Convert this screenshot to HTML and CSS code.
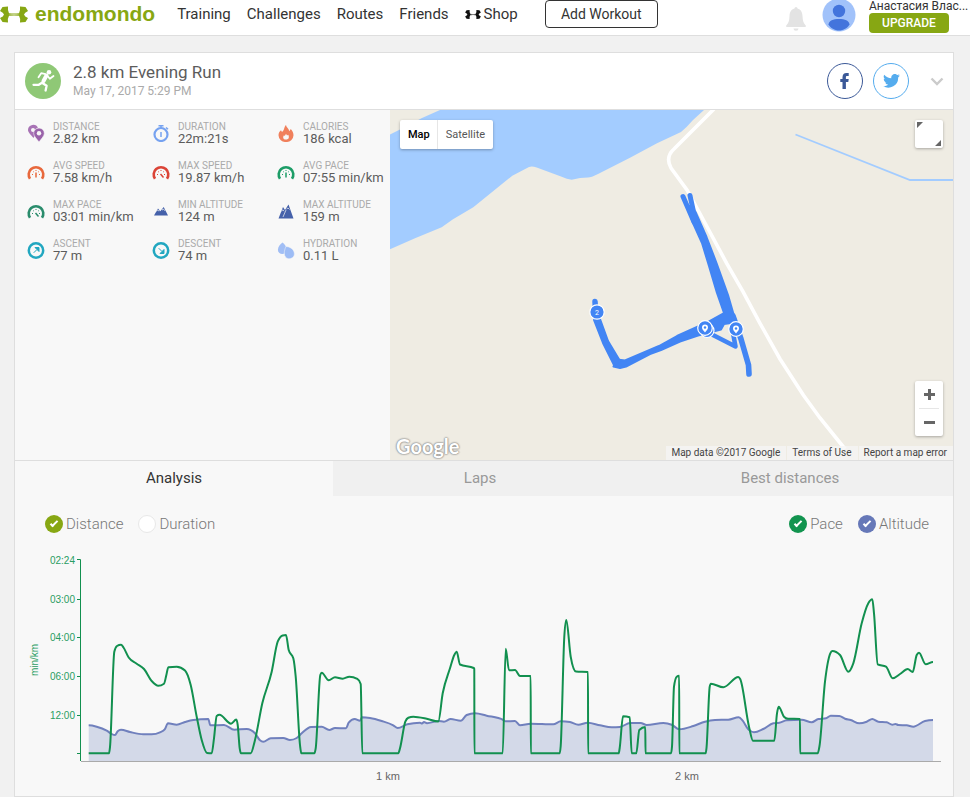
FILE: index.html
```html
<!DOCTYPE html>
<html lang="en">
<head>
<meta charset="utf-8">
<title>2.8 km Evening Run</title>
<link rel="stylesheet" href="styles.css">
</head>
<body>
<svg class="defs" aria-hidden="true">
  <symbol id="ua" viewBox="0 0 28 16">
    <path d="M2.500 .5L8 0Q7.500 4.500 9 6.700Q14 7.300 19 6.700Q20.500 4.500 20 0L25.500 .5L28 4.500Q24.500 6 24 8Q24.500 10 28 11.500L25.500 15.500L20 16Q20.500 11.500 19 9.300Q14 8.700 9 9.300Q7.500 11.500 8 16L2.500 15.500L0 11.500Q3.500 10 4 8Q3.500 6 0 4.500ZM8 8Q14 8.600 20 8Q14 7.400 8 8Z" fill="currentColor" fill-rule="evenodd"/>
  </symbol>
  <symbol id="gauge" viewBox="0 0 18 18">
    <path d="M3 15.700A7.300 7.300 0 1 1 15 15.700" fill="none" stroke="currentColor" stroke-width="2.600"/>
    <path d="M5 11.500h1M6.200 8.500l.7.7M9 7v1M11.800 8.500l-.7.7M12 11.500h1" stroke="currentColor" stroke-width="1"/>
  </symbol>
  <symbol id="dial" viewBox="0 0 18 18">
    <circle cx="9" cy="9.500" r="7.200" fill="none" stroke="currentColor" stroke-width="2.500"/>
  </symbol>
</svg>

<header class="topbar">
  <a class="logo" href="#"><svg class="logo-mark" aria-hidden="true"><use href="#ua"/></svg>endomondo</a>
  <nav class="nav">
    <a href="#">Training</a>
    <a href="#">Challenges</a>
    <a href="#">Routes</a>
    <a href="#">Friends</a>
    <a class="shop" href="#"><svg class="shop-mark" aria-hidden="true"><use href="#ua"/></svg>Shop</a>
  </nav>
  <button class="add" type="button">Add Workout</button>
  <div class="account">
    <button class="bell" type="button" aria-label="Notifications">
      <svg width="20" height="24" viewBox="0 0 20 24"><path d="M8.500 1.500a1.500 1.500 0 0 1 3 0C15 2.500 16.300 5 16.500 9c.2 4.500.8 7 3.200 9.500.5.600.2 1.500-.7 1.500H1c-.9 0-1.200-.9-.7-1.500C2.700 16 3.300 13.500 3.500 9 3.700 5 5 2.500 8.500 1.500ZM7.500 21.500h5a2.500 2.200 0 0 1-5 0Z" fill="#e3e3e3"/></svg>
    </button>
    <svg class="avatar" viewBox="0 0 34 34" role="img" aria-label="Profile"><circle cx="17" cy="17" r="16.500" fill="#a1c2fa"/><circle cx="17" cy="13" r="6.200" fill="#4374dc"/><path d="M6.500 26.500C7 22.500 11 21 17 21s10 1.500 10.500 5.500C25.500 30 21.500 32.500 17 32.500S8.500 30 6.500 26.500Z" fill="#4374dc"/></svg>
    <div class="who">
      <a class="name" href="#">Анастасия Влас...</a>
      <a class="upgrade" href="#">UPGRADE</a>
    </div>
  </div>
</header>

<main class="page">
  <article class="card">
    <header class="card-head">
      <svg class="sport" viewBox="0 0 36 36" aria-hidden="true"><circle cx="18" cy="18" r="18" fill="#8fc876"/><circle cx="24" cy="9.300" r="2.300" fill="#fff"/><path d="M19 18l-1.600 2 4.200 2.800-1 4.700M17.400 19.500l-3.600 2.300H8.500" fill="none" stroke="#fff" stroke-width="2.300" stroke-linejoin="round" stroke-linecap="round"/><path d="M21.500 12.500L18.500 18" stroke="#fff" stroke-width="4" stroke-linecap="round"/><path d="M20.500 11.200l-4.300-1-2.700 4M23 13.500l1.800 2.300 3.700-2.800" fill="none" stroke="#fff" stroke-width="1.800" stroke-linecap="round" stroke-linejoin="round"/></svg>
      <div class="heading">
        <h1>2.8 km Evening Run</h1>
        <time datetime="2017-05-17T17:29">May 17, 2017 5:29 PM</time>
      </div>
      <div class="share">
        <button class="round fb" type="button" aria-label="Share on Facebook"><svg width="10" height="16" viewBox="0 0 10 16"><path d="M2.500 16V9H.3V6h2.200V4.200C2.500 1.500 4 0 6.400 0H8.700v3H7.200C6.200 3 5.900 3.400 5.900 4.200V6h2.800L8.300 9H5.900v7Z" fill="currentColor"/></svg></button>
        <button class="round tw" type="button" aria-label="Share on Twitter"><svg width="17" height="14" viewBox="0 0 24 20"><path d="M24 2.300a10 10 0 0 1-2.800.8A5 5 0 0 0 23.300.4a10 10 0 0 1-3.100 1.200 4.900 4.900 0 0 0-8.400 4.500A14 14 0 0 1 1.700.9a4.900 4.900 0 0 0 1.500 6.600A5 5 0 0 1 1 6.900a4.900 4.900 0 0 0 3.900 4.900 5 5 0 0 1-2.200.1 4.900 4.900 0 0 0 4.600 3.400A10 10 0 0 1 0 17.300a14 14 0 0 0 21.500-12.400A10 10 0 0 0 24 2.300Z" fill="currentColor"/></svg></button>
        <button class="more" type="button" aria-label="More"><svg width="14" height="9" viewBox="0 0 14 9"><path d="M1.500 1.500L7 7l5.500-5.500" fill="none" stroke="#cbcbcb" stroke-width="2.400"/></svg></button>
      </div>
    </header>

    <section class="overview">
      <ul class="stats">
        <li><svg viewBox="0 0 18 18" aria-hidden="true"><path d="M6.500 14C3 10 1 8 1 6a5.200 5.200 0 0 1 10-2C8 5 7 8 8 11Z" fill="#a873b5"/><circle cx="6" cy="6" r="2" fill="#f7f7f7"/><path d="M12 18C9 14 6.700 12 6.700 9.300a5.300 5.300 0 0 1 10.600 0C17.300 12 15 14 12 18Z" fill="#9a63aa" stroke="#f7f7f7" stroke-width=".6"/><circle cx="12" cy="9.300" r="2.200" fill="#f7f7f7"/></svg><div><span>DISTANCE</span><b>2.82 km</b></div></li>
        <li><svg viewBox="0 0 18 18" aria-hidden="true"><circle cx="9" cy="10.500" r="6.500" fill="none" stroke="#76a2f0" stroke-width="2.200"/><path d="M6.500 1.700h5M9 1.700v2M9 8v5M14 3.500l2 1.800" stroke="#76a2f0" stroke-width="1.500"/></svg><div><span>DURATION</span><b>22m:21s</b></div></li>
        <li><svg viewBox="0 0 18 18" aria-hidden="true"><path d="M9 1c.3 2.500 3 3.500 3.300 6.300L13.800 5C15.500 7 16.500 9 16.500 11.200A7 7 0 0 1 9 18a7 7 0 0 1-7.500-6.800C1.500 9 2.500 7.500 4 6.300L5 8C7.500 6.500 6.800 3 9 1Z" fill="#f0805c"/><path d="M9 9.700l1 1.800 1.200-.8C12.500 13 12 15.500 9 15.500S5.500 13 7 11.200l.8.800Z" fill="#f7f7f7"/></svg><div><span>CALORIES</span><b>186 kcal</b></div></li>
        <li class="orange"><svg viewBox="0 0 18 18" aria-hidden="true"><use href="#gauge"/><path d="M9 9.500v5" stroke="currentColor" stroke-width="1.500"/></svg><div><span>AVG SPEED</span><b>7.58 km/h</b></div></li>
        <li class="red"><svg viewBox="0 0 18 18" aria-hidden="true"><use href="#gauge"/><path d="M8.500 11l3 3.500" stroke="currentColor" stroke-width="1.500"/></svg><div><span>MAX SPEED</span><b>19.87 km/h</b></div></li>
        <li class="green"><svg viewBox="0 0 18 18" aria-hidden="true"><use href="#gauge"/><path d="M9 9.500v5" stroke="currentColor" stroke-width="1.500"/></svg><div><span>AVG PACE</span><b>07:55 min/km</b></div></li>
        <li class="pine"><svg viewBox="0 0 18 18" aria-hidden="true"><use href="#gauge"/><path d="M8.500 11l3 3.500" stroke="currentColor" stroke-width="1.500"/></svg><div><span>MAX PACE</span><b>03:01 min/km</b></div></li>
        <li><svg viewBox="0 0 18 18" aria-hidden="true"><path d="M2 13.500L6 6.500l2.300 2.700L11.700 5l4.300 8.500Z" fill="#4561aa"/><path d="M4.500 9l1.200-1 1 1 .8-.3M10 8l1.300-.7 1 .9 1-.2" stroke="#f7f7f7" stroke-width=".8" fill="none"/></svg><div><span>MIN ALTITUDE</span><b>124 m</b></div></li>
        <li><svg viewBox="0 0 18 18" aria-hidden="true"><path d="M1.500 16.500L6 5l2 3 3.500-5.500L16.500 16.500Z" fill="#4561aa"/><path d="M4.500 9l1.500-1.200L7 9.200M9.500 7l1.500-1 1.500 1.500M6 15L9 8" stroke="#f7f7f7" stroke-width=".7" fill="none"/></svg><div><span>MAX ALTITUDE</span><b>159 m</b></div></li>
        <li class="cyan"><svg viewBox="0 0 18 18" aria-hidden="true"><use href="#dial"/><path d="M12 6.500v4L8 6.500ZM6.700 11.800l3-3" fill="currentColor" stroke="currentColor" stroke-width="1"/></svg><div><span>ASCENT</span><b>77 m</b></div></li>
        <li class="cyan"><svg viewBox="0 0 18 18" aria-hidden="true"><use href="#dial"/><path d="M12 12.500v-4L8 12.500ZM6.700 7.200l3 3" fill="currentColor" stroke="currentColor" stroke-width="1"/></svg><div><span>DESCENT</span><b>74 m</b></div></li>
        <li><svg viewBox="0 0 18 18" aria-hidden="true"><path d="M5.500 1.500C8 3.500 9.500 6 9.500 8.700a4.300 4.300 0 0 1-8.600 0C.9 6 3 3.500 5.500 1.500Z" fill="#a1bef5"/><path d="M9 5.500c4 .2 7.800 2.800 8.300 6.500a5 5 0 0 1-9.600 2.500C6.800 12 7.500 8.500 9 5.500Z" fill="#9dbcf5" stroke="#f7f7f7" stroke-width=".5"/></svg><div><span>HYDRATION</span><b>0.11 L</b></div></li>
      </ul>

      <div class="map">
        <svg class="tiles" viewBox="390 110 563 350" preserveAspectRatio="xMidYMid slice" aria-hidden="true">
          <path d="M390 110H953V460H390Z" fill="#efece3"/>
          <path d="M390 134.500L405 127 422 118 440 110H704L693 120Q687 127 681 132L657 143.300 630 157.700 598 174Q591 177.500 588 177.500L580 178 571.700 179.700Q567 179 561.700 176.700L536.700 167.500Q532 166 529 167L512.300 175.700 473.300 207.300 453 219.300 441.700 227.300 415 238.300 390 249.300Z" fill="#a3ccff"/>
          <path d="M714 109L674 149Q665 157 671 168L687 190 698 210 726.700 263.300 743 291.700 760 323.300 780 359 803.300 395 820 418 845 449" fill="none" stroke="#fff" stroke-width="3.600"/>
          <path d="M795.500 134.500L910 180H953" fill="none" stroke="#a3ccff" stroke-width="1.800"/>
          <g fill="#4285f4" stroke="#4285f4" stroke-linecap="round" stroke-linejoin="round">
            <path d="M683 196.500L694 222" stroke-width="5" fill="none"/>
            <path d="M690 195.500L694 214" stroke-width="5" fill="none"/>
            <path d="M686 203L693 223 702 243 709 266 717 293 724 313 706 323 697 327 677 336 659 346 625 360.500 617 359.500 613.500 366.500 620 368 626 366.500 650 354 661 350 680 341.500 698 335.500 721 329.500 724 324 731 323 735.500 321 728 295 716.500 263 706.500 237 695.500 212Z" stroke-width="2"/>
            <path d="M733 316L741 339 748.500 365 749 374" stroke-width="5.600" fill="none"/>
            <path d="M711 334L735.500 346.500 733 333" stroke-width="4.500" fill="none"/>
            <path d="M595 301.500L596 318" stroke-width="5.500" fill="none"/>
            <path d="M594 320L603 343 614 365 620 361 608 341 600 319Z" stroke-width="2"/>
          </g>
          <g fill="#4285f4" stroke="#fff" stroke-width="1.200">
            <circle cx="707" cy="330.500" r="7"/><circle cx="705" cy="328" r="7.300"/><circle cx="736" cy="329" r="7.300"/><circle cx="597" cy="312" r="7.200"/>
          </g>
          <path d="M705 332.500c-1.500-2-3-3.300-3-5a3 3 0 0 1 6 0c0 1.700-1.500 3-3 5ZM736 333.500c-1.500-2-3-3.300-3-5a3 3 0 0 1 6 0c0 1.700-1.500 3-3 5Z" fill="#fff"/>
          <circle cx="705" cy="327.500" r="1.200" fill="#4285f4"/><circle cx="736" cy="328.500" r="1.200" fill="#4285f4"/>
          <text class="pin" x="597" y="315">2</text>
        </svg>
        <div class="map-types"><button class="on" type="button">Map</button><button type="button">Satellite</button></div>
        <button class="fullscreen" type="button" aria-label="Fullscreen"><svg width="28" height="28" viewBox="0 0 28 28"><path d="M2 2h6L2 8ZM26 20v6h-6Z" fill="#666"/></svg></button>
        <div class="zoom">
          <button type="button" aria-label="Zoom in"><svg width="11" height="11" viewBox="0 0 11 11"><path d="M0 5.500h11M5.500 0v11" stroke="#666" stroke-width="3"/></svg></button>
          <button type="button" aria-label="Zoom out"><svg width="11" height="11" viewBox="0 0 11 11"><path d="M0 5.500h11" stroke="#666" stroke-width="3"/></svg></button>
        </div>
        <span class="watermark">Google</span>
        <div class="credits"><span>Map data ©2017 Google</span><a href="#">Terms of Use</a><a href="#">Report a map error</a></div>
      </div>
    </section>

    <nav class="tabs">
      <button class="tab analysis" type="button">Analysis</button>
      <button class="tab laps" type="button">Laps</button>
      <button class="tab best" type="button">Best distances</button>
    </nav>

    <section class="analysis-panel">
      <form class="options">
        <label><input class="lime" type="radio" name="axis" checked>Distance</label>
        <label><input class="lime" type="radio" name="axis">Duration</label>
        <label class="push"><input class="pace" type="checkbox" checked>Pace</label>
        <label><input class="alt" type="checkbox" checked>Altitude</label>
      </form>
      <svg class="chart" viewBox="15 540 938 256" role="img" aria-label="Pace and altitude by distance">
        <path id="altitude-area" class="altitude-area"/>
        <path id="altitude-line" class="altitude-line"/>
        <path id="pace-line" class="pace-line"/>
        <path d="M77 559.500H80.500V761M77 599.500h3M77 637.500h3M77 676.500h3M77 715.500h3M77 753.500h3" class="axis-y"/>
        <path d="M81 761.500H941" class="axis-x"/>
        <g class="y-labels">
          <text x="75" y="564">02:24</text><text x="75" y="603">03:00</text><text x="75" y="641">04:00</text><text x="75" y="680">06:00</text><text x="75" y="719">12:00</text>
        </g>
        <text class="unit" transform="translate(38 660) rotate(-90)">min/km</text>
        <g class="x-labels"><text x="388" y="780">1 km</text><text x="687" y="780">2 km</text></g>
      </svg>
    </section>
  </article>
</main>
<script src="chart.js"></script>
</body>
</html>
```
FILE: styles.css
```css
* { box-sizing: border-box; }

body {
  margin: 0;
  background: #f1f1f1;
  color: #333;
  font-family: Roboto, "Liberation Sans", sans-serif;
  font-size: 15px;
}

a { color: inherit; text-decoration: none; }

button {
  padding: 0;
  border: 0;
  background: none;
  color: inherit;
  font: inherit;
}

svg { display: block; }
.defs { display: none; }

/* Top bar */
.topbar {
  display: flex;
  align-items: flex-start;
  height: 36px;
  background: #fff;
  border-bottom: 1px solid #dedede;
}

.logo {
  display: flex;
  align-items: center;
  gap: 7px;
  height: 28px;
  margin-right: 22px;
  color: #87a713;
  font: bold 21px/28px "Liberation Sans", sans-serif;
}

.logo-mark { width: 28px; height: 17px; }

.nav { display: flex; gap: 16px; line-height: 28px; }
.shop { display: flex; align-items: center; gap: 3px; }
.shop-mark { width: 16px; height: 9px; color: #111; }

.add {
  width: 113px;
  height: 28px;
  margin-left: 27px;
  border: 1px solid #333;
  border-radius: 4px;
  font-size: 14px;
}

.account { display: flex; margin-left: auto; }
.bell { margin: 4px 16px 0 0; }
.avatar { width: 34px; height: 34px; margin: -2px 13px 0 0; }
.who { width: 101px; }
.name { display: block; font-size: 12px; line-height: 12px; white-space: nowrap; }

.upgrade {
  display: block;
  width: 80px;
  margin-top: 1px;
  border-radius: 4px;
  background: #87a713;
  color: #fff;
  font-size: 12px;
  font-weight: 500;
  line-height: 20px;
  text-align: center;
}

/* Workout card */
.page { padding: 16px 16px 0 14px; }

.card { border: 1px solid #dedede; background: #f8f8f8; }

.card-head {
  display: flex;
  align-items: center;
  height: 57px;
  padding: 0 9px 0 10px;
  border-bottom: 1px solid #dedede;
  background: #fff;
}

.sport { width: 36px; height: 36px; }
.heading { margin-left: 12px; }
h1 { margin: 0; color: #5c5c5c; font-size: 17px; font-weight: 400; line-height: 20px; }
time { display: block; color: #aaa; font-size: 12px; line-height: 18px; }

.share { display: flex; align-items: center; gap: 10px; margin-left: auto; }

.round {
  display: grid;
  place-items: center;
  width: 36px;
  height: 36px;
  border: 1px solid currentColor;
  border-radius: 50%;
}

.fb { color: #3b5998; }
.tw { color: #55acee; }
.more { margin-left: 11px; }

.overview {
  display: grid;
  grid-template-columns: 375px 1fr;
  min-height: 350px;
}

.stats {
  display: grid;
  grid-template-columns: repeat(3, 1fr);
  align-content: start;
  gap: 15px 0;
  margin: 0;
  padding: 11px 0 0;
  list-style: none;
}

.stats li { display: flex; align-items: center; gap: 8px; padding-left: 12px; }
.stats svg { flex: none; width: 18px; height: 18px; }
.stats span, .stats b { display: block; white-space: nowrap; }
.stats span { color: #aaa; font-size: 10px; line-height: 12px; }
.stats b { color: #5c5c5c; font-size: 13px; font-weight: 400; line-height: 12px; }

.orange { color: #e8683c; }
.red { color: #db4437; }
.green { color: #1d9d67; }
.pine { color: #2a8c6c; }
.cyan { color: #22a7c0; }

/* Map */
.map { position: relative; overflow: hidden; background: #efece3; }
.tiles { position: absolute; inset: 0; width: 100%; height: 100%; }
.pin { fill: #fff; font-size: 7px; text-anchor: middle; }

.map-types, .fullscreen, .zoom {
  position: absolute;
  border-radius: 2px;
  background: #fff;
  box-shadow: 0 1px 3px rgba(0, 0, 0, .3);
}

.map-types { top: 10px; left: 10px; display: flex; color: #565656; font-size: 11px; line-height: 29px; }
.map-types button { padding: 0 8px; }
.map-types .on { padding-right: 7px; border-right: 1px solid #e6e6e6; color: #000; font-weight: 500; }
.fullscreen { top: 10px; right: 10px; }
.zoom { right: 10px; bottom: 24px; width: 28px; padding: 0 4px; }
.zoom button { display: grid; place-items: center; width: 20px; height: 27px; }
.zoom button + button { height: 28px; border-top: 1px solid #e6e6e6; }

.watermark {
  position: absolute;
  bottom: 2px;
  left: 6px;
  color: #fff;
  font: bold 20px/24px Lato, sans-serif;
  text-shadow: 0 0 2px #888, 0 0 2px #999, 0 0 1px #888;
}

.credits {
  position: absolute;
  right: 0;
  bottom: 0;
  display: flex;
  gap: 1px;
  color: #444;
  font-size: 10px;
  line-height: 14px;
}

.credits > * { padding: 0 6px 0 5px; background: rgba(245, 245, 245, .75); }

/* Tabs */
.tabs { display: flex; border-top: 1px solid #dedede; }
.tab { height: 35px; padding-bottom: 2px; background: #f0f0f0; color: #999; }
.analysis { flex: 318; background: #f8f8f8; color: #333; }
.laps { flex: 294; }
.best { flex: 326; }

/* Analysis */
.options {
  display: flex;
  gap: 15px;
  padding: 18px 24px 0 30px;
  color: #777;
  font-weight: 300;
  line-height: 20px;
}

.options label { display: flex; align-items: center; gap: 3px; }
.push { margin-left: auto; }

.options input {
  display: grid;
  place-items: center;
  width: 18px;
  height: 18px;
  margin: 0;
  border: 1px solid #e8e8e8;
  border-radius: 50%;
  background: #fff;
  appearance: none;
}

.options input:checked { border: 0; }
.options input:checked::after {
  content: "";
  width: 8px;
  height: 4px;
  margin-top: -3px;
  box-sizing: border-box;
  border: solid #fff;
  border-width: 0 0 2px 2px;
  transform: rotate(-45deg);
}

.lime:checked { background: #87a713; }
.pace:checked { background: #12944f; }
.alt:checked { background: #6678b8; }

.chart { width: 100%; height: auto; margin-top: 6px; font-family: "Liberation Sans", sans-serif; }
.altitude-area { fill: #d3d9e8; }
.altitude-line { fill: none; stroke: #7080bd; stroke-width: 2; }
.pace-line { fill: none; stroke: #12904f; stroke-width: 2; stroke-linejoin: round; }
.axis-y { fill: none; stroke: #12904f; stroke-width: 1; }
.axis-x { stroke: #aaa; stroke-width: 1; }
.y-labels, .unit { fill: #2a9d62; font-size: 10px; }
.y-labels { text-anchor: end; }
.unit, .x-labels { text-anchor: middle; }
.x-labels { fill: #666; font-size: 11px; }
```
FILE: chart.js
```js
// Samples as x,y pairs in chart units.
const pace = `88.7,753.3 109,753.3 110,747 114.3,651.7 117,646 121,644.7 123.5,647.5 128.7,657.5 136.7,663.7 144,669
151.7,681 158.3,685.8 164,683.7 166.3,675.3 168.3,667.2 176.7,666.7 185,670.5 190.7,685 196.7,716.7 201.7,740 207,753
211.7,753.3 214,738.3 216.7,716 219.5,714.8 231,723.7 236.300,719.5 237.7,725 239.7,748.3 241,753.3 250.7,753.3
255,740 262.3,703.3 271.7,671.7 277.7,641.7 282.7,635.5 286,635 288.7,650 293.3,658.3 295.7,676.7 300,745 301.300,753.3
314.3,753.3 315.7,748.3 320.3,675 321.7,672.7 328.7,680.3 335,677.3 342.7,678.7 349.3,676.7 357.3,678.9 360.7,684
362.3,753.3 398.3,753.3 400,748.3 405.3,721.7 408.3,717.7 413.3,716.700 426.7,718.7 438.3,721.5 442.7,693.3 450,668.3
454.3,655 456.7,651.7 460,664.5 473.7,668 474.300,669 474.4,753.3 502.7,753.3 505.7,648.7 509,670.3 515,670 520,676
530.7,676 530.8,753.3 559.7,753.3 560.7,746 564.3,636.7 566.3,620 570.7,656.700 576,671.5 588,672 588.1,753.3
618.7,753.3 619.7,748 623,716.3 629.7,717.2 631.7,753.3 636.3,753.3 639.3,730 645.3,727 645.500,753.3 671,753.3
672,746.7 674,686.7 676.7,676.7 679.2,675.7 679.3,753.3 705.7,753.3 706.5,748 709.7,686.7 710.9,683.7 723.3,687.3
738.3,677 740.3,679.3 749,726.7 753,740.7 774.3,740.7 777,713.3 778.7,706.7 784,716.7 788,718.7 800,719 800.1,753.3
817.7,753.3 819.5,746 825,681.7 830.3,653.3 832.3,651 840,655 848.3,671.7 853.3,663.3 861.7,623.3 868.3,603.3
872.3,599.3 874,613.3 877.7,664.3 886,666.7 892.7,678.3 900,674 907.7,669 912.7,672 916.7,655 919,652.7 925.7,664.3 933,662`;
const altitude = `88.7,725.3 96.7,726.7 106.7,730.7 111.7,734 115,735 117.7,731.3 121,729.7 130,732 143.3,734.3 151.7,734.3
160,732.3 164.7,729.3 168,723.3 176.7,724.7 185,722 193.3,720 208.3,719 210.3,725.3 224,725 234.3,729.7 246.7,729
255,733.3 260,740.3 263.3,741.7 270.7,738.3 283.3,738 290,740 296.7,738 301.7,733.3 311,727 321.7,726.7 329.3,730
335,728 346,728.3 348.7,722.7 354.7,719 360,720.7 362,717.3 370,718 381.7,721 393.3,725.3 397.7,728 407.3,724.3
420,722.7 422,723.500 424,722 427,723.2 438.3,721 444,721.7 450.7,719 460.7,720.7 466.7,715 475,713.3 486.7,715.7
503.3,720 505.500,721.300 515,721 520,725.3 530.7,723.7 553.3,724.3 560.7,721.3 570,722 578.3,724.7 587.7,722.7
600,725.3 611.7,727.3 620,727 630,723 640.7,723 646.7,725 663.3,723 671.7,724.7 679.3,729.3 693.3,726 705,721.7
715,720 728.3,719.7 738.7,717.3 742.7,720.7 748.3,729.3 754,732.3 763.3,729 773.3,723.3 779.3,722.7 786.7,720.3
801.7,719.7 811.7,722.3 818.3,719 826,718.3 830.7,715.7 839.3,716 845,718.7 850.7,720 859.3,723.3 866.7,721.7
872.3,719 878.3,721.7 886.7,722.3 892.3,724.7 895.500,724 898.3,725 906.7,725.3 913.3,726.7 925,721 933,720`;

const parse = (text) => text.trim().split(/\s+/).map((pair) => pair.split(",").map(Number));

// Monotone cubic curve: smooth, without overshoot between samples.
function curve(points) {
  const step = points.slice(1).map((p, i) => p[0] - points[i][0]);
  const slope = step.map((h, i) => (points[i + 1][1] - points[i][1]) / h);
  const tangent = points.map((p, i) => {
    const a = slope[i - 1], b = slope[i];
    if (a === undefined || b === undefined || a * b <= 0) return 0;
    const mean = (a * step[i] + b * step[i - 1]) / (step[i - 1] + step[i]);
    return Math.sign(a) * 2 * Math.min(Math.abs(a), Math.abs(b), Math.abs(mean) / 2);
  });
  let d = `M${points[0]}`;
  for (let i = 1; i < points.length; i++) {
    const [x0, y0] = points[i - 1], [x1, y1] = points[i];
    const h = (x1 - x0) / 3;
    d += `C${x0 + h},${y0 + h * tangent[i - 1]} ${x1 - h},${y1 - h * tangent[i]} ${x1},${y1}`;
  }
  return d;
}

const altitudeCurve = curve(parse(altitude));
document.getElementById("pace-line").setAttribute("d", curve(parse(pace)));
document.getElementById("altitude-line").setAttribute("d", altitudeCurve);
document.getElementById("altitude-area").setAttribute("d", `${altitudeCurve}V761H88.7Z`);
```
